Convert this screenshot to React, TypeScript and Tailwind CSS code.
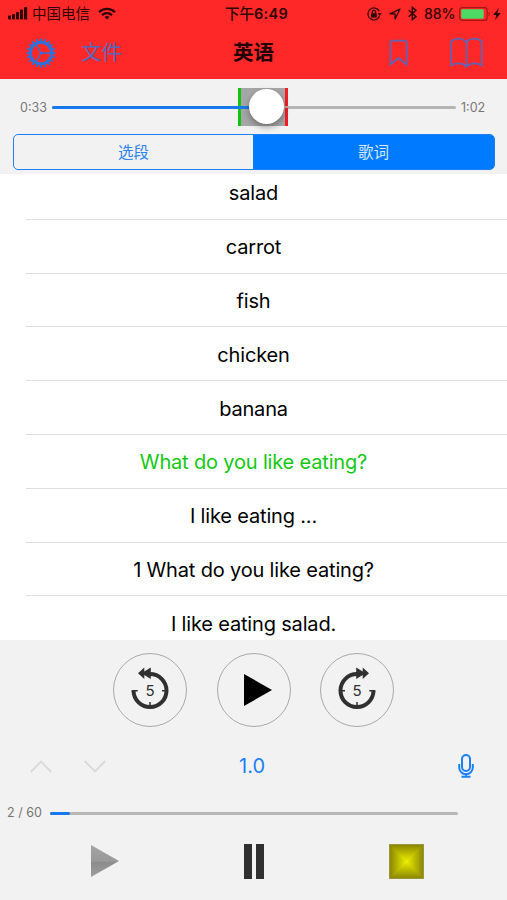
import { useState } from 'react';

const lyrics = [
  'salad',
  'carrot',
  'fish',
  'chicken',
  'banana',
  'What do you like eating?',
  'I like eating ...',
  '1 What do you like eating?',
  'I like eating salad.',
];

const gearTeeth = Array.from({ length: 20 }, (_, i) => i * 18);

function StatusBar() {
  return (
    <div className="flex h-[27px] items-center text-[14.5px] text-[#2e0606]">
      <div className="flex w-[225px] items-center pl-2">
        <svg width="20" height="13" viewBox="0 0 20 13" fill="currentColor">
          <rect x="0" y="8.5" width="3" height="4" rx="0.8" />
          <rect x="4" y="7" width="3" height="5.5" rx="0.8" />
          <rect x="8" y="5" width="3" height="7.5" rx="0.8" />
          <rect x="12" y="2.5" width="3" height="10" rx="0.8" />
          <rect x="16" y="0" width="3.2" height="12.5" rx="0.8" />
        </svg>
        <span className="ml-1 w-[59px] whitespace-nowrap">中国电信</span>
        <svg className="ml-[7px]" width="18" height="13" viewBox="0 0 18 13" fill="none" stroke="currentColor" strokeWidth="2.3">
          <path d="M1 5.1a11.4 11.4 0 0 1 16 0" />
          <path d="M4 8.2a7.1 7.1 0 0 1 10 0" />
          <path d="M6.5 10a3.8 3.8 0 0 1 5 0L9 12.5z" fill="currentColor" stroke="none" />
        </svg>
      </div>
      <span className="w-[66px] whitespace-nowrap font-medium">
        下午<span className="font-semibold tracking-[0.3px]">6:49</span>
      </span>
      <svg className="ml-[76px]" width="15" height="14" viewBox="0 0 15 14" fill="none" stroke="currentColor" strokeWidth="1.2">
        <path d="M12.3 4.3a6 6 0 1 0 .2 4.9" />
        <path d="M10.6 6.2h4.2l-2.1 2.7z" fill="currentColor" stroke="none" />
        <rect x="4" y="6.2" width="5.8" height="4.2" rx="0.5" fill="currentColor" stroke="none" />
        <path d="M5.3 6.4V5a1.6 1.6 0 0 1 3.2 0v1.4" />
      </svg>
      <svg className="ml-[7px]" width="12" height="12" viewBox="0 0 12 12" fill="none" stroke="currentColor" strokeWidth="1.3" strokeLinejoin="round">
        <path d="M11 1 1 5.9h5.1V11z" />
      </svg>
      <svg className="ml-[7px]" width="9" height="15" viewBox="0 0 9 15" fill="none" stroke="currentColor" strokeWidth="1.4">
        <path d="M.7 4.2 8 10.6l-3.7 3.1V1.3L8 4.4.7 10.8" />
      </svg>
      <span className="ml-[7px] w-[35px] text-[14px] font-medium">88%</span>
      <svg width="32" height="14" viewBox="0 0 32 14">
        <rect x="0.6" y="0.6" width="27.5" height="12.8" rx="2.6" fill="none" stroke="#a51616" strokeWidth="1.2" />
        <rect x="2.2" y="2.2" width="22.5" height="9.6" rx="1.2" fill="#4cd964" />
        <path d="M29.6 4.6v4.8c1.7-.9 1.7-3.9 0-4.8z" fill="#a51616" />
      </svg>
      <svg className="ml-0.5" width="8" height="12" viewBox="0 0 8 12" fill="currentColor">
        <path d="M5.8 0 .2 7h3.2L2 12l5.8-7H4.4z" />
      </svg>
    </div>
  );
}

function GearIcon() {
  return (
    <svg width="30" height="30" viewBox="-15 -15 30 30" fill="none" stroke="#2d72dc">
      <circle r="10.7" strokeWidth="3" />
      {gearTeeth.map((deg) => (
        <path key={deg} d="M0-11.8v-2.900" strokeWidth="1.800" transform={`rotate(${deg})`} />
      ))}
      <path d="M0 0h10M0 0-5-8.7M0 0-5 8.7" strokeWidth="1.3" />
      <circle r="1.4" fill="#2d72dc" stroke="none" />
    </svg>
  );
}

function NavBar() {
  return (
    <div className="flex h-[52px] items-center text-[20.5px]">
      <button className="ml-[26px]" aria-label="settings">
        <GearIcon />
      </button>
      <button className="ml-[25px] w-[41px] whitespace-nowrap text-[#5368bd]">文件</button>
      <h1 className="ml-[111px] w-[42px] whitespace-nowrap font-semibold text-[#210303]">英语</h1>
      <svg className="ml-[114px]" width="19" height="28" viewBox="0 0 19 28" fill="none" stroke="#6164b4" strokeWidth="1.8">
        <path d="M1.4 3.6q0-2 2-2h12.2q2 0 2 2V25.5L9.5 19l-8.1 6.5z" />
      </svg>
      <svg className="ml-[42px]" width="33" height="32" viewBox="0 0 33 32" fill="none" stroke="#6164b4" strokeWidth="1.8">
        <path d="M16.5 5.5C13.500 .8 5.500.4 1.200 4.500V28.300C5 25.800 12.500 25.200 16.500 29.500 20.500 25.200 28 25.800 31.800 28.300V4.500C27.500.4 19.500.8 16.500 5.500zV31" />
      </svg>
    </div>
  );
}

function Scrubber() {
  return (
    <div className="flex h-[55px] items-center pl-5 text-[12.5px] text-[#777]">
      <span className="w-8 pt-[3px]">0:33</span>
      <div className="relative h-[38px] w-[404px]">
        <div className="absolute left-[186px] h-full w-[50px] bg-[#a6a6a6]" />
        <div className="absolute left-0 top-[18px] h-[3px] w-full rounded-full bg-[#b5b5b5]" />
        <div className="absolute left-[186px] h-full w-[3px] bg-[#12c312]" />
        <div className="absolute left-[233px] h-full w-[3px] bg-[#f31d24]" />
        <div className="absolute left-[233px] top-[18px] h-[2px] w-[3px] bg-[#d9a0a2]" />
        <div className="absolute left-0 top-[18px] h-[3px] w-[210px] rounded-full bg-[#1679ee]" />
        <div className="absolute left-[197px] top-[1px] size-[35px] rounded-full bg-white shadow-[0_3px_6px_rgba(0,0,0,0.35)]" />
      </div>
      <span className="ml-[5px] pt-[3px]">1:02</span>
    </div>
  );
}

function SkipIcon({ forward = false }: { forward?: boolean }) {
  return (
    <svg width="40" height="46" viewBox="-20 -23 40 46">
      <g transform={forward ? 'scale(-1 1)' : undefined} stroke="#303030" fill="none">
        <path d="M-16.500 .800A16.500 16.500 0 1 0 0-16" strokeWidth="4" />
        <path d="M-18.300.800h6M12 .800h5M0 12v5" strokeWidth="1.500" />
        <path d="M-12-16.800-5.700-22.500v4L.8-22.500v11.400l-6.500-4v4z" fill="#303030" stroke="none" />
      </g>
      <text x="0" y="5.500" textAnchor="middle" fontSize="15" fontFamily="Inter, sans-serif" fill="#303030">
        5
      </text>
    </svg>
  );
}

function Controls({ playing, onToggle }: { playing: boolean; onToggle: () => void }) {
  const round = 'flex size-[74px] items-center justify-center rounded-full border border-[#a9a9a9]';

  return (
    <div className="flex h-[100px] items-center justify-center gap-[29.500px]">
      <button className={round} aria-label="back 5 seconds">
        <SkipIcon />
      </button>
      <button className={round} aria-label={playing ? 'pause' : 'play'} onClick={onToggle}>
        <svg className="ml-2" width="28" height="32" viewBox="0 0 28 32">
          <path d="M0 0 28 16 0 32z" />
        </svg>
      </button>
      <button className={round} aria-label="forward 5 seconds">
        <SkipIcon forward />
      </button>
    </div>
  );
}

function StopIcon() {
  return (
    <svg width="35" height="35" viewBox="0 0 35 35">
      <defs>
        <linearGradient id="stopV" x1="0" y1="0" x2="0" y2="35" gradientUnits="userSpaceOnUse">
          <stop offset="0" stopColor="#858200" />
          <stop offset="0.5" stopColor="#eeee00" />
          <stop offset="1" stopColor="#858200" />
        </linearGradient>
        <linearGradient id="stopH" x1="0" y1="0" x2="35" y2="0" gradientUnits="userSpaceOnUse">
          <stop offset="0" stopColor="#858200" />
          <stop offset="0.5" stopColor="#eeee00" />
          <stop offset="1" stopColor="#858200" />
        </linearGradient>
      </defs>
      <rect width="35" height="35" fill="url(#stopV)" />
      <path d="M0 0 35 35V0L0 35z" fill="url(#stopH)" />
      <rect x="0.5" y="0.5" width="34" height="34" fill="none" stroke="#99983f" />
    </svg>
  );
}

export default function App() {
  const [tab, setTab] = useState<'segments' | 'lyrics'>('lyrics');
  const [playing, setPlaying] = useState(false);
  const active = 'bg-[#007aff] text-[#d5eaff]';
  const idle = 'text-[#2b83ed]';

  return (
    <div className="flex h-[900px] w-[507px] flex-col overflow-hidden bg-[#f2f2f2] font-['Inter','Noto_Sans_CJK_SC',sans-serif]">
      <header className="h-[79px] shrink-0 bg-[#ff2828]">
        <StatusBar />
        <NavBar />
      </header>

      <section className="h-[95px] shrink-0">
        <Scrubber />
        <div className="ml-[13px] flex h-9 w-[482px] overflow-hidden rounded-[5px] border border-[#1d7ff5] text-[15.5px]">
          <button className={`w-[239px] pt-px ${tab === 'segments' ? active : idle}`} onClick={() => setTab('segments')}>
            选段
          </button>
          <button className={`flex-1 pt-px ${tab === 'lyrics' ? active : idle}`} onClick={() => setTab('lyrics')}>
            歌词
          </button>
        </div>
      </section>

      <main className="h-[466px] shrink-0 overflow-hidden bg-white">
        <ul className="-mt-2">
          {lyrics.map((line, i) => (
            <li
              key={line}
              className={`flex h-[53.8px] flex-col text-center text-[20px] tracking-[-0.17px] ${i === 5 ? 'text-[#12c812]' : 'text-black'}`}
            >
              <span className="flex flex-1 items-center justify-center pt-[2px]">{line}</span>
              <span className="ml-[26px] h-px bg-[#dedede]" />
            </li>
          ))}
        </ul>
      </main>

      <footer className="flex-1">
        <Controls playing={playing} onToggle={() => setPlaying(!playing)} />

        <div className="flex h-[52px] items-center">
          <svg className="ml-[30px]" width="22" height="13" viewBox="0 0 22 13" fill="none" stroke="#d9d9d9" strokeWidth="1.8">
            <path d="M.7 12 11 1.5 21.3 12" />
          </svg>
          <svg className="ml-8" width="22" height="13" viewBox="0 0 22 13" fill="none" stroke="#d9d9d9" strokeWidth="1.8">
            <path d="M.7 1 11 11.5 21.3 1" />
          </svg>
          <span className="ml-[133px] w-[30px] text-[20px] text-[#1b80f4]">1.0</span>
          <svg className="ml-[189px]" width="16" height="24" viewBox="0 0 16 24" fill="none" stroke="#1b80f4" strokeWidth="2">
            <rect x="4" y="1" width="8" height="16" rx="4" />
            <path d="M1.2 10v3.5a6.8 6.8 0 0 0 13.6 0V10M8 20.3V23M3.5 22.7h9" />
          </svg>
        </div>

        <div className="flex h-[42px] items-center pl-[7px] text-[12.5px] text-[#757575]">
          <span className="w-[43px] whitespace-nowrap">2 / 60</span>
          <div className="h-[3px] w-[408px] rounded-full bg-[#b8b8b8]">
            <div className="h-full w-5 rounded-full bg-[#1679ee]" />
          </div>
        </div>

        <div className="flex h-[54px] items-center">
          <svg className="ml-[91px]" width="28" height="32" viewBox="0 0 28 32">
            <defs>
              <linearGradient id="playGrey" x1="0" y1="0" x2="0" y2="1">
                <stop offset="0" stopColor="#a5a5a5" />
                <stop offset="0.5" stopColor="#999" />
                <stop offset="0.55" stopColor="#8c8c8c" />
                <stop offset="1" stopColor="#9e9e9e" />
              </linearGradient>
            </defs>
            <path d="M0 0 28 16 0 32z" fill="url(#playGrey)" />
          </svg>
          <div className="ml-[125px] flex h-[35px] w-5 justify-between">
            <div className="w-2 bg-[#303030]" />
            <div className="w-2 bg-[#303030]" />
          </div>
          <div className="ml-[125px]">
            <StopIcon />
          </div>
        </div>
      </footer>
    </div>
  );
}
